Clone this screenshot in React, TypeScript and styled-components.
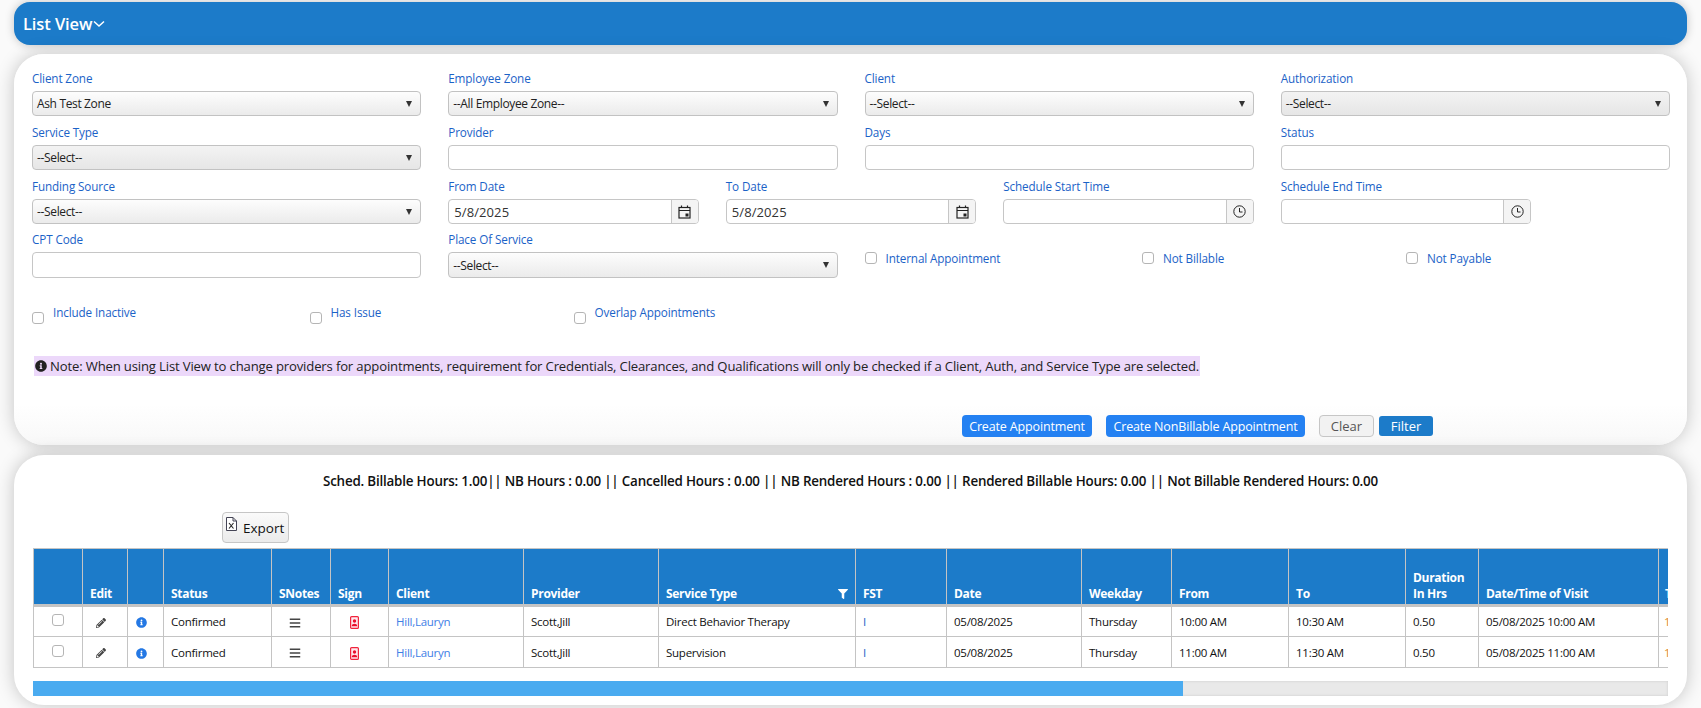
import React from "react";
import styled, { createGlobalStyle } from "styled-components";
import { FaPencilAlt, FaInfoCircle, FaBars, FaFilter } from "react-icons/fa";

const Global = createGlobalStyle`
  html, body { margin: 0; padding: 0; background: #fafafa; overflow: hidden; }
  body { font-family: "Open Sans", "Noto Sans", sans-serif; font-size: 12px; color: #111; }
  * { box-sizing: border-box; }
`;

const Page = styled.div`
  display: flex;
  flex-direction: column;
  gap: 10px;
  padding: 2px 14px 0;
  height: 708px;
`;

const TitleBar = styled.div`
  display: flex;
  align-items: center;
  gap: 1px;
  height: 43px;
  padding: 0 9px;
  margin-bottom: -1px;
  border-radius: 16px;
  background: #1c7bc9;
  color: #fff;
  font-size: 16.5px;
  font-weight: 600;
  letter-spacing: -0.1px;
  box-shadow: 0 0 10px rgba(0, 0, 0, 0.22);
`;

const Card = styled.section<{ $h: number }>`
  height: ${(p) => p.$h}px;
  padding: 0 18px;
  background: #fff;
  border-radius: 30px;
  box-shadow: 0 0 18px rgba(0, 0, 0, 0.22);
`;

const FormCard = styled(Card)`
  display: flex;
  flex-direction: column;
  padding: 16px 17px 0 18px;
  background: linear-gradient(#fff 0, #fff 350px, #f8f8f8 100%);
`;

const FormGrid = styled.div`
  display: grid;
  grid-template-columns: repeat(12, 1fr);
  column-gap: 27px;
  row-gap: 8px;
`;

const Field = styled.div<{ $span: number; $pull?: boolean }>`
  grid-column: span ${(p) => p.$span};
  display: flex;
  flex-direction: column;
  margin-top: ${(p) => (p.$pull ? -1 : 0)}px;
`;

const Label = styled.label`
  display: block;
  height: 18px;
  margin-bottom: 3px;
  line-height: 17px;
  color: #1b62c7;
  font-size: 11.7px;
  letter-spacing: -0.12px;
  white-space: nowrap;
`;

const SelectBox = styled.div<{ $dim?: boolean; $tall?: boolean }>`
  display: flex;
  align-items: center;
  justify-content: space-between;
  height: ${(p) => (p.$tall ? 26 : 25)}px;
  padding: 0 5px 0 4px;
  border: 1px solid #c2c2c2;
  border-radius: 4px;
  background: ${(p) =>
    p.$dim
      ? "linear-gradient(#f3f3f3, #e6e6e6)"
      : "linear-gradient(#fdfdfd, #ebebeb)"};
  font-size: 12px;
  letter-spacing: -0.35px;
  color: #222;
`;

const Caret = styled.span`
  width: 0;
  height: 0;
  margin-right: 3px;
  border-left: 3px solid transparent;
  border-right: 3px solid transparent;
  border-top: 6px solid #333;
`;

const TextBox = styled.div<{ $tall?: boolean }>`
  height: ${(p) => (p.$tall ? 26 : 25)}px;
  border: 1px solid #c6c6c6;
  border-radius: 4px;
  background: #fff;
`;

const Group = styled.div`
  display: flex;
  height: 25px;
  border: 1px solid #c6c6c6;
  border-radius: 4px;
  background: #fff;
  overflow: hidden;
`;

const GroupValue = styled.div`
  flex: 1;
  padding-left: 5px;
  line-height: 24px;
  font-size: 13px;
  letter-spacing: 0.1px;
  color: #333;
`;

const GroupAddon = styled.div`
  display: flex;
  align-items: center;
  justify-content: center;
  width: 27px;
  border-left: 1px solid #c6c6c6;
  background: #f4f4f4;
  color: #333;
`;

const CheckRow = styled.div`
  display: grid;
  grid-template-columns: 277.5px 264px 1fr;
  align-items: start;
`;

const CheckCell = styled.div<{ $offset?: boolean }>`
  display: flex;
  align-items: ${(p) => (p.$offset ? "flex-start" : "center")};
  gap: 9px;
  color: #1b62c7;
  font-size: 11.7px;
  letter-spacing: -0.12px;
  line-height: 18px;
  white-space: nowrap;
`;

const Box = styled.span<{ $lowered?: boolean }>`
  display: inline-block;
  width: 12px;
  height: 12px;
  margin-top: ${(p) => (p.$lowered ? 9 : 0)}px;
  border: 1px solid #b5b5b5;
  border-radius: 3px;
  background: #fff;
`;

const InternalRow = styled(CheckRow)`
  grid-column: 7 / span 6;
  padding-top: 17px;
`;

const LowerRow = styled(CheckRow)`
  margin-top: 25px;
`;

const Note = styled.div`
  align-self: flex-start;
  display: flex;
  align-items: center;
  gap: 3px;
  height: 20px;
  margin: 32px 0 0 2px;
  padding: 0 1px;
  background: #ecd8fa;
  font-size: 13.1px;
  letter-spacing: -0.15px;
  color: #222;
  white-space: nowrap;
`;

const Actions = styled.div`
  display: flex;
  align-items: center;
  justify-content: flex-end;
  margin-top: 39px;
  padding-right: 237px;
`;

const PrimaryButton = styled.div<{ $w: number }>`
  display: flex;
  align-items: center;
  justify-content: center;
  width: ${(p) => p.$w}px;
  height: 22px;
  margin-right: 14px;
  border-radius: 4px;
  background: #2481f2;
  color: #fff;
  font-size: 12.5px;
  letter-spacing: -0.15px;
  white-space: nowrap;
`;

const ClearButton = styled.div`
  display: flex;
  align-items: center;
  justify-content: center;
  width: 55px;
  height: 22px;
  margin-right: 5px;
  border: 1px solid #c6c6c6;
  border-radius: 4px;
  background: #f2f2f2;
  color: #555;
  font-size: 13px;
`;

const FilterButton = styled.div`
  display: flex;
  align-items: center;
  justify-content: center;
  width: 54px;
  height: 20px;
  border-radius: 3px;
  background: #1c7bc9;
  color: #fff;
  font-size: 13px;
`;

const Summary = styled.div`
  padding-top: 17px;
  height: 35px;
  line-height: 18px;
  text-align: center;
  font-weight: 600;
  font-size: 13.4px;
  letter-spacing: -0.2px;
  color: #111;
  white-space: nowrap;
`;

const ExportRow = styled.div`
  display: flex;
  padding: 22px 0 5px 190px;
`;

const ExportButton = styled.div`
  display: flex;
  align-items: center;
  gap: 6px;
  width: 67px;
  height: 31px;
  padding-left: 3px;
  border: 1px solid #c6c6c6;
  border-radius: 4px;
  background: linear-gradient(#fafafa, #ebebeb);
  font-size: 13.5px;
  color: #111;
`;

const TableClip = styled.div`
  width: 1635px;
  margin-left: 1px;
  overflow: hidden;
`;

const Table = styled.table`
  width: 1770px;
  table-layout: fixed;
  border-collapse: collapse;
`;

const HeadCell = styled.th<{ $inset?: number }>`
  height: 57px;
  padding: 0 7px 2px ${(p) => p.$inset ?? 7}px;
  vertical-align: bottom;
  text-align: left;
  background: #1c7bc9;
  border: 1px solid #c4c4c4;
  border-bottom-width: 3px;
  color: #fff;
  font-size: 12px;
  font-weight: 700;
  letter-spacing: -0.3px;
  line-height: 16px;
`;

const HeadInner = styled.div`
  display: flex;
  align-items: center;
  justify-content: space-between;
`;

const BodyCell = styled.td<{ $center?: boolean; $accent?: string; $inset?: number }>`
  height: 31px;
  padding: 0 7px 0 ${(p) => p.$inset ?? 7}px;
  border: 1px solid #c4c4c4;
  text-align: ${(p) => (p.$center ? "center" : "left")};
  color: ${(p) => p.$accent ?? "#111"};
  font-size: 11.5px;
  letter-spacing: -0.25px;
  white-space: nowrap;
`;

const IconWrap = styled.span<{ $color: string }>`
  display: inline-flex;
  vertical-align: middle;
  color: ${(p) => p.$color};
`;

const Scrollbar = styled.div`
  height: 15px;
  width: 1635px;
  margin: 13px 0 0 1px;
  background: #e9e9e9;
  box-shadow: inset 0 0 3px rgba(0, 0, 0, 0.12);
`;

const Thumb = styled.div`
  height: 100%;
  background: #4aabf0;
`;

const Chevron = () => (
  <svg width="12" height="12" viewBox="0 0 12 12" fill="none" stroke="#fff" strokeWidth="1.5">
    <path d="M1 3.5 L6 8 L11 3.5" />
  </svg>
);

const CalendarIcon = () => (
  <svg width="13" height="14" viewBox="0 0 13 14" fill="none" stroke="#222" strokeWidth="1.2">
    <rect x="1" y="2.5" width="11" height="10.5" />
    <path d="M1 5.5 H12 M3.5 0.5 V3 M9.5 0.5 V3" />
    <rect x="7.5" y="8.5" width="3" height="3" fill="#222" stroke="none" />
  </svg>
);

const ClockIcon = () => (
  <svg width="13" height="13" viewBox="0 0 13 13" fill="none" stroke="#222" strokeWidth="1">
    <circle cx="6.5" cy="6.5" r="5.7" />
    <path d="M6.5 3 V7 H9.5" />
  </svg>
);

const SignIcon = () => (
  <svg width="9" height="13" viewBox="0 0 9 13" fill="none">
    <rect x="0.6" y="0.6" width="7.8" height="11.8" rx="1" fill="#ffe9ee" stroke="#f0243c" strokeWidth="1.2" />
    <circle cx="4.5" cy="5" r="1.7" fill="#ea0f2c" />
    <path d="M1.8 10.2 C1.8 7 7.2 7 7.2 10.2 Z" fill="#ea0f2c" />
  </svg>
);

const XlsIcon = () => (
  <svg width="11" height="14" viewBox="0 0 11 14" fill="none" style={{ alignSelf: "flex-start", marginTop: 4 }}>
    <path d="M0.5 0.5 H7 L10.5 4 V13.5 H0.5 Z M7 0.5 V4 H10.5" stroke="#445" strokeWidth="1" fill="#fff" />
    <path d="M3 6 L7.5 11.5 M7.5 6 L3 11.5" stroke="#222" strokeWidth="1.1" />
  </svg>
);

type Col = { w: number; label?: string };
const columns: Col[] = [
  { w: 49 }, { w: 45, label: "Edit" }, { w: 36 }, { w: 108, label: "Status" },
  { w: 59, label: "SNotes" }, { w: 58, label: "Sign" }, { w: 135, label: "Client" },
  { w: 135, label: "Provider" }, { w: 197, label: "Service Type" }, { w: 91, label: "FST" },
  { w: 135, label: "Date" }, { w: 90, label: "Weekday" }, { w: 117, label: "From" },
  { w: 117, label: "To" }, { w: 73, label: "Duration In Hrs" },
  { w: 180, label: "Date/Time of Visit" }, { w: 145, label: "Time In" },
];

const rows = [
  { service: "Direct Behavior Therapy", from: "10:00 AM", to: "10:30 AM" },
  { service: "Supervision", from: "11:00 AM", to: "11:30 AM" },
];

const selectField = (label: string, value: string, dim = false) => (
  <Field $span={3}>
    <Label>{label}</Label>
    <SelectBox $dim={dim}>
      <span>{value}</span>
      <Caret />
    </SelectBox>
  </Field>
);

const textField = (label: string) => (
  <Field $span={3}>
    <Label>{label}</Label>
    <TextBox />
  </Field>
);

const groupField = (label: string, value: string, icon: React.ReactNode) => (
  <Field $span={2}>
    <Label>{label}</Label>
    <Group>
      <GroupValue>{value}</GroupValue>
      <GroupAddon>{icon}</GroupAddon>
    </Group>
  </Field>
);

export default function App() {
  return (
    <Page>
      <Global />
      <TitleBar>
        List View
        <Chevron />
      </TitleBar>

      <FormCard $h={391}>
        <FormGrid>
          {selectField("Client Zone", "Ash Test Zone")}
          {selectField("Employee Zone", "--All Employee Zone--")}
          {selectField("Client", "--Select--")}
          {selectField("Authorization", "--Select--", true)}
          {selectField("Service Type", "--Select--", true)}
          {textField("Provider")}
          {textField("Days")}
          {textField("Status")}
          {selectField("Funding Source", "--Select--")}
          {groupField("From Date", "5/8/2025", <CalendarIcon />)}
          {groupField("To Date", "5/8/2025", <CalendarIcon />)}
          {groupField("Schedule Start Time", "", <ClockIcon />)}
          {groupField("Schedule End Time", "", <ClockIcon />)}
          <Field $span={3} $pull>
            <Label>CPT Code</Label>
            <TextBox $tall />
          </Field>
          <Field $span={3} $pull>
            <Label>Place Of Service</Label>
            <SelectBox $tall>
              <span>--Select--</span>
              <Caret />
            </SelectBox>
          </Field>
          <InternalRow>
            <CheckCell><Box />Internal Appointment</CheckCell>
            <CheckCell><Box />Not Billable</CheckCell>
            <CheckCell><Box />Not Payable</CheckCell>
          </InternalRow>
        </FormGrid>

        <LowerRow>
          <CheckCell $offset><Box $lowered />Include Inactive</CheckCell>
          <CheckCell $offset><Box $lowered />Has Issue</CheckCell>
          <CheckCell $offset><Box $lowered />Overlap Appointments</CheckCell>
        </LowerRow>

        <Note>
          <IconWrap $color="#222"><FaInfoCircle size={12} /></IconWrap>
          Note: When using List View to change providers for appointments, requirement for Credentials, Clearances, and Qualifications will only be checked if a Client, Auth, and Service Type are selected.
        </Note>

        <Actions>
          <PrimaryButton $w={130}>Create Appointment</PrimaryButton>
          <PrimaryButton $w={199}>Create NonBillable Appointment</PrimaryButton>
          <ClearButton>Clear</ClearButton>
          <FilterButton>Filter</FilterButton>
        </Actions>
      </FormCard>

      <Card $h={250}>
        <Summary>
          Sched. Billable Hours: 1.00|| NB Hours : 0.00 || Cancelled Hours : 0.00 || NB Rendered Hours : 0.00 || Rendered Billable Hours: 0.00 || Not Billable Rendered Hours: 0.00
        </Summary>
        <ExportRow>
          <ExportButton><XlsIcon />Export</ExportButton>
        </ExportRow>
        <TableClip>
          <Table>
            <colgroup>
              {columns.map((c, i) => <col key={i} style={{ width: c.w }} />)}
            </colgroup>
            <thead>
              <tr>
                {columns.map((c, i) => (
                  <HeadCell key={i} $inset={i === columns.length - 1 ? 6 : undefined}>
                    {c.label === "Service Type" ? (
                      <HeadInner>
                        {c.label}
                        <IconWrap $color="#fff"><FaFilter size={10} /></IconWrap>
                      </HeadInner>
                    ) : c.label}
                  </HeadCell>
                ))}
              </tr>
            </thead>
            <tbody>
              {rows.map((r) => (
                <tr key={r.from}>
                  <BodyCell $center><Box /></BodyCell>
                  <BodyCell $inset={13}><IconWrap $color="#444"><FaPencilAlt size={10} /></IconWrap></BodyCell>
                  <BodyCell $inset={8}><IconWrap $color="#2478e4"><FaInfoCircle size={11} /></IconWrap></BodyCell>
                  <BodyCell>Confirmed</BodyCell>
                  <BodyCell $inset={17}><IconWrap $color="#444"><FaBars size={12} /></IconWrap></BodyCell>
                  <BodyCell $inset={19}><IconWrap $color="#f0243c"><SignIcon /></IconWrap></BodyCell>
                  <BodyCell $accent="#3f80e6">Hill,Lauryn</BodyCell>
                  <BodyCell>Scott,Jill</BodyCell>
                  <BodyCell>{r.service}</BodyCell>
                  <BodyCell $accent="#1b62c7">I</BodyCell>
                  <BodyCell>05/08/2025</BodyCell>
                  <BodyCell>Thursday</BodyCell>
                  <BodyCell>{r.from}</BodyCell>
                  <BodyCell>{r.to}</BodyCell>
                  <BodyCell>0.50</BodyCell>
                  <BodyCell>05/08/2025 {r.from}</BodyCell>
                  <BodyCell $accent="#e08a1e" $inset={5}>{r.from}</BodyCell>
                </tr>
              ))}
            </tbody>
          </Table>
        </TableClip>
        <Scrollbar>
          <Thumb style={{ width: `${(1150 / 1635) * 100}%` }} />
        </Scrollbar>
      </Card>
    </Page>
  );
}
